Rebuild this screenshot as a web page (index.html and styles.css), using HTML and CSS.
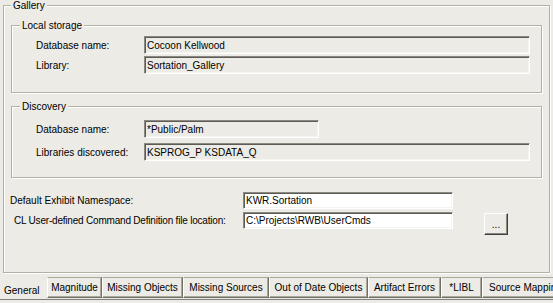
FILE: index.html
```html
<!DOCTYPE html>
<html lang="en">
<head>
    <meta charset="UTF-8">
    <title>Gallery - General</title>
    <link rel="stylesheet" href="styles.css">
</head>
<body>
    <fieldset class="group gallery">
        <legend>Gallery</legend>

        <fieldset class="group local">
            <legend>Local storage</legend>
            <div class="fields">
                <label>Database name:</label>
                <input class="field" type="text" value="Cocoon Kellwood" readonly>
                <label>Library:</label>
                <input class="field" type="text" value="Sortation_Gallery" readonly>
            </div>
        </fieldset>

        <fieldset class="group discovery">
            <legend>Discovery</legend>
            <div class="fields">
                <label>Database name:</label>
                <input class="field short" type="text" value="*Public/Palm" readonly>
                <label>Libraries discovered:</label>
                <input class="field" type="text" value="KSPROG_P KSDATA_Q" readonly>
            </div>
        </fieldset>

        <div class="options">
            <label>Default Exhibit Namespace:</label>
            <input class="field edit" type="text" value="KWR.Sortation">
            <span></span>
            <label class="indent">CL User-defined Command Definition file location:</label>
            <input class="field edit" type="text" value="C:\Projects\RWB\UserCmds">
            <button class="browse">...</button>
        </div>
    </fieldset>

    <div class="tabs">
        <div class="tab active general">General</div>
        <div class="tab magnitude">Magnitude</div>
        <div class="tab missing-objects">Missing Objects</div>
        <div class="tab missing-sources">Missing Sources</div>
        <div class="tab out-of-date">Out of Date Objects</div>
        <div class="tab artifact">Artifact Errors</div>
        <div class="tab libl">*LIBL</div>
        <div class="tab source-mapping">Source Mapping</div>
    </div>
</body>
</html>
```

FILE: styles.css
```css
/* Reset */
* {
    margin: 0;
    padding: 0;
    box-sizing: border-box;
}

body {
    width: 553px;
    height: 303px;
    overflow: hidden;
    background: #ecebe5;
    font-family: 'Liberation Sans', Arial, sans-serif;
    font-size: 10px;
    color: #000;
}

/* Etched group boxes */
.group {
    border: 1px solid #b3b0a4;
    box-shadow: inset 1px 1px 0 #fff, 1px 1px 0 #fff;
    min-width: 0;
}

.group legend {
    padding: 0 2px;
    line-height: 13px;
    background: #ecebe5;
}

.gallery {
    margin: -1px 0 0 3px;
    width: 547px;
    height: 274px;
    padding: 7px 7px 0;
}

.local {
    padding: 4px 11px 18px 8px;
}

.discovery {
    margin-top: 7px;
    padding: 7px 11px 16px 8px;
}

/* Label / value rows */
.fields {
    display: grid;
    grid-template-columns: 108px 1fr;
    row-gap: 2px;
    align-items: center;
    margin-left: 16px;
}

.discovery .fields {
    row-gap: 5px;
}

.field {
    height: 18px;
    width: 100%;
    padding: 0 2px;
    font: inherit;
    color: #000;
    background: transparent;
    border: 1px solid;
    border-color: #8a8880 #fff #fff #8a8880;
    box-shadow: inset 1px 1px 0 #5c5b55, inset -1px -1px 0 #f4f3ee;
    outline: none;
}

.field.short {
    width: 175px;
}

.field.edit {
    height: 17px;
    background: #fff;
}

/* Bottom options */
.options {
    display: grid;
    grid-template-columns: 233px 210px auto;
    row-gap: 3px;
    align-items: start;
    margin: 14px 0 0 -1px;
}

.options label {
    line-height: 17px;
}

.options .indent {
    padding-left: 4px;
    letter-spacing: -0.2px;
}

.browse {
    width: 24px;
    height: 22px;
    margin: 1px 0 0 31px;
    font: inherit;
    color: #000;
    background: #ecebe5;
    border: 1px solid;
    border-color: #fff #404040 #404040 #fff;
    box-shadow: inset -1px -1px 0 #8a8880;
}

/* Tab strip */
.tabs {
    display: flex;
    height: 23px;
    margin-top: 4px;
    border-bottom: 1px solid #808080;
    overflow: hidden;
}

.tab {
    flex: none;
    height: 21px;
    line-height: 19px;
    text-align: center;
    white-space: nowrap;
    border: 1px solid;
    border-color: #aca899 #716f64 #716f64 #fff;
    box-shadow: inset -1px -1px 0 #aca899;
}

.tab.active {
    text-align: left;
    padding: 3px 0 0 3px;
    border-color: transparent;
    box-shadow: none;
}

.general { width: 47px; }
.magnitude { width: 55px; }
.missing-objects { width: 81px; }
.missing-sources { width: 86px; }
.out-of-date { width: 99px; }
.artifact { width: 73px; }
.libl { width: 41px; }
.source-mapping { width: 90px; text-align: left; padding-left: 6px; }
```
